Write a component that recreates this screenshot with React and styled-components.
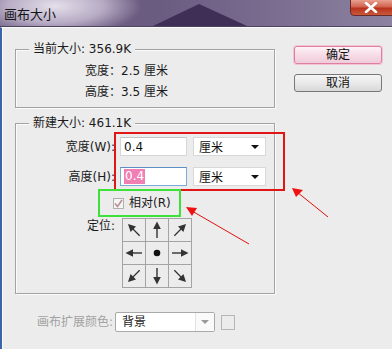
import React from "react";
import styled, { createGlobalStyle } from "styled-components";

const GlobalStyle = createGlobalStyle`
  html, body {
    margin: 0;
    padding: 0;
    background: #ececec;
  }
  body {
    font-family: "DejaVu Sans", "Noto Sans CJK SC", sans-serif;
    font-size: 12px;
    color: #111;
  }
`;

const ARROWS = ["nw", "n", "ne", "w", "c", "e", "sw", "s", "se"];
const ANGLE = { n: 0, ne: 45, e: 90, se: 135, s: 180, sw: 225, w: 270, nw: 315 };

function ArrowIcon({ dir }) {
  if (dir === "c") {
    return (
      <svg width="22" height="22" viewBox="0 0 22 22">
        <circle cx="11" cy="11" r="3.3" fill="#111" />
      </svg>
    );
  }
  return (
    <svg width="22" height="22" viewBox="0 0 22 22">
      <g transform={`rotate(${ANGLE[dir]} 11 11)`}>
        <line x1="11" y1="19" x2="11" y2="8" stroke="#333" strokeWidth="1.4" />
        <polygon points="11,2.5 7.2,10 14.8,10" fill="#333" />
      </g>
    </svg>
  );
}

export default function App() {
  return (
    <>
      <GlobalStyle />
      <Window>
        <TitleBar>
          <TitleGlow />
          <Peak width="100" height="26" viewBox="0 0 100 26">
            <polygon points="0,26 46,4 94,26" fill="#3f2e55" />
          </Peak>
          <Title>画布大小</Title>
          <CloseButton>
            <svg width="14" height="11" viewBox="0 0 14 11">
              <path d="M2 1 L12 10 M12 1 L2 10" stroke="#fff" strokeWidth="2.6" strokeLinecap="round" />
            </svg>
          </CloseButton>
        </TitleBar>

        <Body>
          <Main>
            <Group>
              <Legend>当前大小: 356.9K</Legend>
              <InfoRows>
                <InfoRow>宽度：2.5 厘米</InfoRow>
                <InfoRow>高度：3.5 厘米</InfoRow>
              </InfoRows>
            </Group>

            <Group $gap="15px">
              <Legend>新建大小: 461.1K</Legend>
              <NewBody>
                <FieldRow>
                  <FieldLabel>宽度(W):</FieldLabel>
                  <Input>0.4</Input>
                  <Select>
                    <span>厘米</span>
                    <Caret />
                  </Select>
                </FieldRow>
                <FieldRow $top="11px">
                  <FieldLabel>高度(H):</FieldLabel>
                  <Input $focus>
                    <Selected>0.4</Selected>
                  </Input>
                  <Select>
                    <span>厘米</span>
                    <Caret />
                  </Select>
                </FieldRow>
                <CheckRow>
                  <CheckBox>
                    <svg width="9" height="9" viewBox="0 0 9 9">
                      <path d="M1 4.5 L3.5 7.5 L8 1" stroke="#b88e94" strokeWidth="1.6" fill="none" />
                    </svg>
                  </CheckBox>
                  相对(R)
                </CheckRow>
                <AnchorRow>
                  <FieldLabel>定位:</FieldLabel>
                  <AnchorGrid>
                    {ARROWS.map((d) => (
                      <AnchorCell key={d}>
                        <ArrowIcon dir={d} />
                      </AnchorCell>
                    ))}
                  </AnchorGrid>
                </AnchorRow>
              </NewBody>
            </Group>

            <ColorRow>
              <DimLabel>画布扩展颜色:</DimLabel>
              <ComboBox>
                <ComboText>背景</ComboText>
                <ComboDrop>
                  <Caret $dim />
                </ComboDrop>
              </ComboBox>
              <Swatch />
            </ColorRow>
          </Main>

          <Side>
            <Button $primary>确定</Button>
            <Button>取消</Button>
          </Side>
        </Body>

        <RedBox />
        <GreenBox />
        <Notes width="392" height="349" viewBox="0 0 392 349">
          <line x1="328" y1="217" x2="297" y2="192" stroke="#e01010" strokeWidth="1" />
          <polygon points="292,188 303,190 296,197" fill="#ee1111" />
          <line x1="249" y1="244" x2="192" y2="211" stroke="#e01010" strokeWidth="1" />
          <polygon points="186,207 197,208 192,216" fill="#ee1111" />
        </Notes>
      </Window>
    </>
  );
}

const Window = styled.div`
  position: relative;
  width: 392px;
  height: 349px;
  overflow: hidden;
  background: #ececec;
`;

const TitleBar = styled.div`
  position: relative;
  height: 26px;
  background: linear-gradient(to right, #6f6184 0%, #6a5b80 40%, #7a6d90 70%, #8c82a0 100%);
  border-bottom: 1px solid #4d4460;
  overflow: hidden;
`;

const TitleGlow = styled.div`
  position: absolute;
  left: -30px;
  top: -24px;
  width: 170px;
  height: 60px;
  background: radial-gradient(ellipse at center, rgba(235, 230, 240, 0.95) 0%, rgba(215, 205, 225, 0.7) 40%, rgba(150, 135, 170, 0) 72%);
`;

const Peak = styled.svg`
  position: absolute;
  left: 153px;
  top: 0;
`;

const Title = styled.div`
  position: relative;
  padding: 5px 0 0 4px;
  font-family: "Noto Sans CJK SC", sans-serif;
  font-size: 13px;
  line-height: 17px;
  color: #151515;
`;

const CloseButton = styled.div`
  position: absolute;
  right: -4px;
  top: -1px;
  width: 46px;
  height: 17px;
  display: flex;
  align-items: center;
  justify-content: center;
  padding-right: 4px;
  box-sizing: border-box;
  border: 1px solid #6a2a2a;
  border-radius: 0 0 4px 4px;
  background: linear-gradient(to bottom, #e8a090 0%, #d26350 45%, #b8321c 55%, #c85a3c 100%);
`;

const Body = styled.div`
  display: flex;
  height: 322px;
  border-top: 1px solid #fafafa;
  border-left: 2px solid #3d64aa;
  box-shadow: inset 1px 0 0 #fafafa;
  background: #ececec;
`;

const Main = styled.div`
  display: flex;
  flex-direction: column;
  margin-left: 13px;
  padding-top: 21px;
  width: 260px;
`;

const Group = styled.div`
  position: relative;
  margin-top: ${(p) => p.$gap || "0"};
  border: 1px solid #a3a3a3;
  box-shadow: 1px 1px 0 #fbfbfb, inset 1px 1px 0 #fbfbfb;
`;

const Legend = styled.div`
  position: absolute;
  top: -9px;
  left: 13px;
  padding: 0 4px;
  background: #ececec;
  line-height: 16px;
  color: #1a1a1a;
`;

const InfoRows = styled.div`
  display: flex;
  flex-direction: column;
  padding: 11px 0 4px 69px;
`;

const InfoRow = styled.div`
  line-height: 21px;
  color: #1a1a1a;
`;

const NewBody = styled.div`
  display: flex;
  flex-direction: column;
  padding: 13px 0 5px 0;
`;

const FieldRow = styled.div`
  display: flex;
  align-items: center;
  height: 19px;
  margin-top: ${(p) => p.$top || "0"};
`;

const FieldLabel = styled.div`
  width: 99px;
  text-align: right;
  line-height: 16px;
  color: #1a1a1a;
  flex: none;
`;

const Input = styled.div`
  box-sizing: border-box;
  width: 67px;
  height: 19px;
  margin-left: 5px;
  padding: 0 0 0 3px;
  display: flex;
  align-items: center;
  background: #fff;
  border: 1px solid ${(p) => (p.$focus ? "#7eaad6" : "#d6d6d6")};
  border-top-color: ${(p) => (p.$focus ? "#5d8ec4" : "#c4c4c4")};
`;

const Selected = styled.span`
  background: #f07fb4;
  color: #fff;
  line-height: 15px;
  padding: 0 1px;
`;

const Select = styled.div`
  box-sizing: border-box;
  width: 73px;
  height: 19px;
  margin-left: 6px;
  padding: 0 6px 0 5px;
  display: flex;
  align-items: center;
  justify-content: space-between;
  background: #fff;
  border: 1px solid #d8d8d8;
`;

const Caret = styled.span`
  width: 0;
  height: 0;
  border-left: 4px solid transparent;
  border-right: 4px solid transparent;
  border-top: 4px solid ${(p) => (p.$dim ? "#9a9a9a" : "#111")};
`;

const CheckRow = styled.div`
  display: flex;
  align-items: center;
  gap: 5px;
  height: 26px;
  margin-top: 4px;
  padding-left: 97px;
  line-height: 16px;
  color: #1a1a1a;
`;

const CheckBox = styled.div`
  box-sizing: border-box;
  width: 11px;
  height: 11px;
  display: flex;
  align-items: center;
  justify-content: center;
  border: 1px solid #b0b0b0;
  background: #f4f4f4;
`;

const AnchorRow = styled.div`
  display: flex;
  align-items: flex-start;
  margin-top: 2px;
`;

const AnchorGrid = styled.div`
  display: grid;
  grid-template-columns: repeat(3, 22px);
  grid-auto-rows: 22px;
  gap: 1px;
  padding: 1px;
  margin-left: 7px;
  background: #a4a4a4;
`;

const AnchorCell = styled.div`
  display: flex;
  align-items: center;
  justify-content: center;
  background: #ececec;
`;

const ColorRow = styled.div`
  display: flex;
  align-items: center;
  height: 20px;
  margin-top: 18px;
  padding-left: 22px;
`;

const DimLabel = styled.div`
  color: #a2a2a2;
  width: 78px;
  line-height: 16px;
  white-space: nowrap;
`;

const ComboBox = styled.div`
  box-sizing: border-box;
  display: flex;
  width: 100px;
  height: 20px;
  border: 1px solid #a9a9a9;
  border-radius: 2px;
  background: #fff;
`;

const ComboText = styled.div`
  flex: 1;
  padding-left: 6px;
  line-height: 18px;
  color: #1a1a1a;
  border-right: 1px solid #e2e2e2;
`;

const ComboDrop = styled.div`
  width: 18px;
  display: flex;
  align-items: center;
  justify-content: center;
  background: #fafafa;
`;

const Swatch = styled.div`
  width: 12px;
  height: 13px;
  margin-left: 6px;
  border: 1px solid #b6b6b6;
  background: #ececec;
`;

const Side = styled.div`
  display: flex;
  flex-direction: column;
  gap: 10px;
  margin-left: 19px;
  padding-top: 18px;
`;

const Button = styled.div`
  box-sizing: border-box;
  width: 88px;
  height: 18px;
  display: flex;
  align-items: center;
  justify-content: center;
  border: 1px solid ${(p) => (p.$primary ? "#de7fa2" : "#777")};
  border-radius: 3px;
  box-shadow: ${(p) => (p.$primary ? "0 0 0 1px #f2c4d6" : "none")};
  background: ${(p) =>
    p.$primary
      ? "linear-gradient(to bottom, #fdf3f7 0%, #f6dce6 50%, #efccd9 100%)"
      : "linear-gradient(to bottom, #f5f5f5 0%, #e9e9e9 50%, #d8d8d8 100%)"};
  line-height: 16px;
  color: #111;
`;

const RedBox = styled.div`
  position: absolute;
  left: 114px;
  top: 132px;
  width: 171px;
  height: 59px;
  box-sizing: border-box;
  border: 2px solid #e01515;
`;

const GreenBox = styled.div`
  position: absolute;
  left: 98px;
  top: 189px;
  width: 83px;
  height: 28px;
  box-sizing: border-box;
  border: 2px solid #3ee03a;
`;

const Notes = styled.svg`
  position: absolute;
  left: 0;
  top: 0;
  pointer-events: none;
`;
